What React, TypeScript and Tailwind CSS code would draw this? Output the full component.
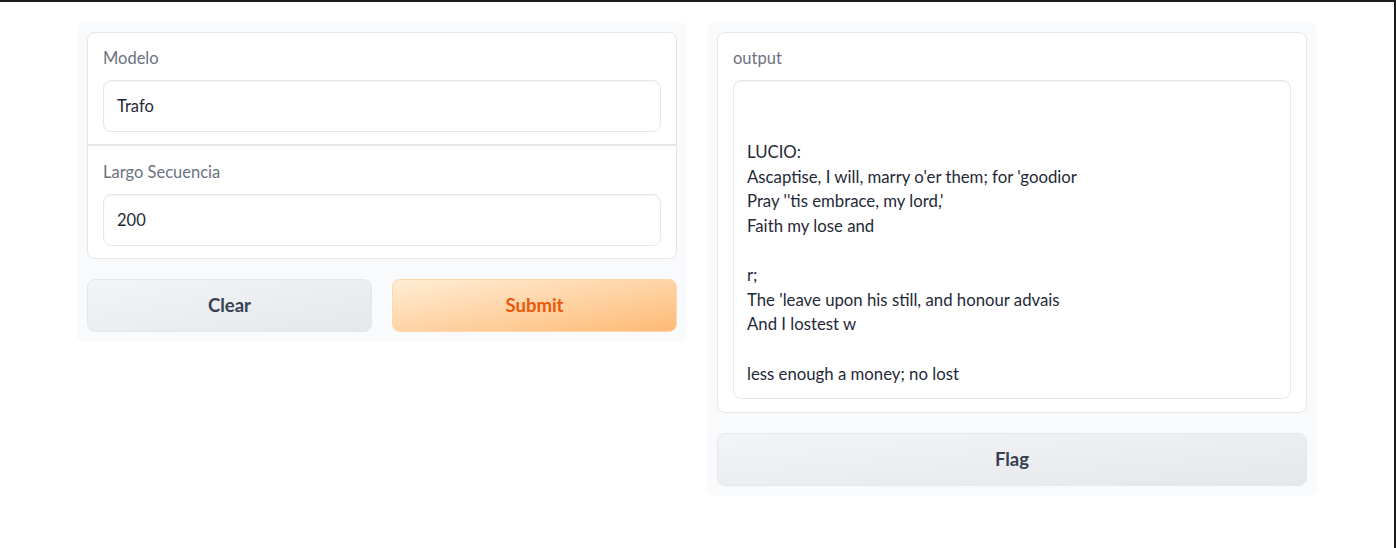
const output = `

LUCIO:
Ascaptise, I will, marry o'er them; for 'goodior
Pray ''tis embrace, my lord,'
Faith my lose and

r;
The 'leave upon his still, and honour advais
And I lostest w

less enough a money; no lost`;

function Field({ label, value, top }: { label: string; value: string; top: string }) {
  return (
    <div className={`px-[15px] pb-[12px] ${top}`}>
      <p className="text-[16.5px] leading-5 text-[#6b7280] mb-[12px]">{label}</p>
      <div className="h-[52px] rounded-lg border border-[#e5e7eb] shadow-[inset_0_1px_2px_rgba(0,0,0,0.05)] px-[13px] flex items-center text-[16.5px] text-[#1f2937]">
        {value}
      </div>
    </div>
  );
}

export default function App() {
  return (
    <div className="w-[1396px] h-[548px] bg-white border-t-2 border-r-2 border-[#1c1c1c] font-['Lato','Noto_Sans',sans-serif]">
      <div className="w-[1240px] ml-[77px] pt-[20px] flex items-start gap-[20px]">
        <div className="w-[610px] bg-[#f9fafb] rounded-lg p-[10px] flex flex-col gap-[20px]">
          <div className="bg-white rounded-lg border border-[#e5e7eb] divide-y-2 divide-[#e5e7eb]">
            <Field label="Modelo" value="Trafo" top="pt-[15px]" />
            <Field label="Largo Secuencia" value="200" top="pt-[16px]" />
          </div>
          <div className="flex gap-[20px]">
            <button className="flex-1 h-[53px] rounded-lg border border-[#e5e7eb] bg-gradient-to-br from-[#f3f4f6] to-[#e5e7eb] text-[#374151] font-bold text-[18.5px]">
              Clear
            </button>
            <button className="flex-1 h-[53px] rounded-lg border border-[#fed7aa] bg-gradient-to-br from-[#ffedd5] to-[#fdba74] text-[#ea580c] font-bold text-[18.5px]">
              Submit
            </button>
          </div>
        </div>
        <div className="w-[610px] bg-[#f9fafb] rounded-lg p-[10px] flex flex-col gap-[20px]">
          <div className="bg-white rounded-lg border border-[#e5e7eb] px-[15px] pt-[15px] pb-[13px]">
            <p className="text-[16.5px] leading-5 text-[#6b7280] mb-[12px]">output</p>
            <div className="h-[319px] rounded-lg border border-[#e5e7eb] shadow-[inset_0_1px_2px_rgba(0,0,0,0.05)] px-[13px] pt-[10px] whitespace-pre text-[16.75px] leading-[24.6px] text-[#1f2937] overflow-hidden">
              {output}
            </div>
          </div>
          <button className="h-[53px] rounded-lg border border-[#e5e7eb] bg-gradient-to-br from-[#f3f4f6] to-[#e5e7eb] text-[#374151] font-bold text-[18.5px]">
            Flag
          </button>
        </div>
      </div>
    </div>
  );
}
